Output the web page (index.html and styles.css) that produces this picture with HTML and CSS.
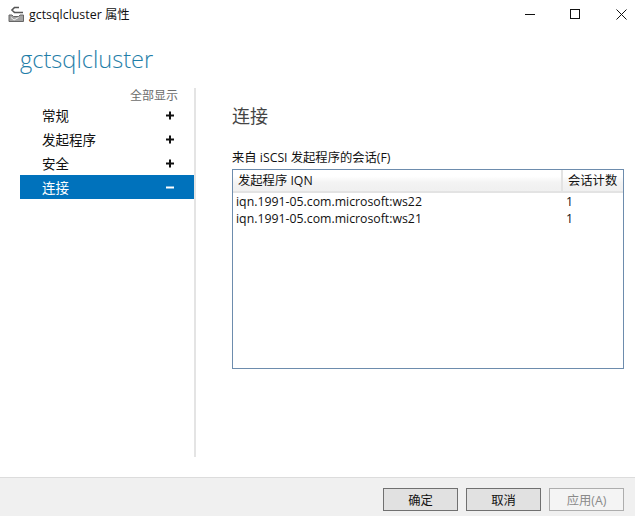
FILE: index.html
```html
<!DOCTYPE html>
<html lang="zh">
<head>
<meta charset="utf-8">
<title>gctsqlcluster 属性</title>
<link rel="stylesheet" href="styles.css">
</head>
<body>
<div class="window">
  <header class="titlebar">
    <svg class="app-icon" width="16" height="16" viewBox="0 0 16 16"><path d="M1 9h3l1.500 1.500h5L12 9h3.500v6.500H1z" fill="#a3a3a3" stroke="#666" stroke-width="1"/><path d="M3 11.500l3 2.500 4.500-2.500" fill="none" stroke="#f0f0f0" stroke-width="1"/><path d="M11 1.500H6.500L4 4l2.500 2.500H15" fill="none" stroke="#555" stroke-width="1.600"/></svg>
    <span class="title">gctsqlcluster 属性</span>
    <div class="win-controls">
      <svg width="11" height="11" viewBox="0 0 11 11"><path d="M1 5.500h10" stroke="#111" stroke-width="1"/></svg>
      <svg width="11" height="11" viewBox="0 0 11 11"><rect x="0.500" y="0.500" width="9" height="9" fill="none" stroke="#111"/></svg>
      <svg width="11" height="11" viewBox="0 0 11 11"><path d="M0.500 0.500l10 10M10.500 0.500l-10 10" stroke="#111" stroke-width="1"/></svg>
    </div>
  </header>
  <h1 class="app-name">gctsqlcluster</h1>
  <div class="content">
    <nav class="sidebar">
      <div class="show-all">全部显示</div>
      <div class="nav-item"><span>常规</span><svg class="sign" width="9" height="9" viewBox="0 0 9 9"><path d="M0 4.500h8M4 0.500v8" stroke="currentColor" stroke-width="2"/></svg></div>
      <div class="nav-item"><span>发起程序</span><svg class="sign" width="9" height="9" viewBox="0 0 9 9"><path d="M0 4.500h8M4 0.500v8" stroke="currentColor" stroke-width="2"/></svg></div>
      <div class="nav-item"><span>安全</span><svg class="sign" width="9" height="9" viewBox="0 0 9 9"><path d="M0 4.500h8M4 0.500v8" stroke="currentColor" stroke-width="2"/></svg></div>
      <div class="nav-item active"><span>连接</span><svg class="sign" width="9" height="9" viewBox="0 0 9 9"><path d="M0 4.500h8" stroke="currentColor" stroke-width="2"/></svg></div>
    </nav>
    <main class="panel">
      <h2 class="panel-title">连接</h2>
      <div class="list-label">来自 iSCSI 发起程序的会话(F)</div>
      <div class="list">
        <div class="list-head">
          <div class="col-a">发起程序 IQN</div>
          <div class="col-b">会话计数</div>
        </div>
        <div class="list-row"><div class="cell-a">iqn.1991-05.com.microsoft:ws22</div><div class="cell-b">1</div></div>
        <div class="list-row"><div class="cell-a">iqn.1991-05.com.microsoft:ws21</div><div class="cell-b">1</div></div>
      </div>
    </main>
  </div>
  <footer class="footer">
    <button class="btn">确定</button>
    <button class="btn">取消</button>
    <button class="btn disabled">应用(A)</button>
  </footer>
</div>
</body>
</html>
```
FILE: styles.css
```css
* { box-sizing: border-box; }
html, body { margin: 0; padding: 0; }
body {
  width: 635px;
  height: 516px;
  overflow: hidden;
  background: #fff;
  font-family: "Open Sans", "Noto Sans CJK SC", sans-serif;
  font-size: 12.3px;
  color: #111;
}
.window { display: flex; flex-direction: column; height: 516px; }
.titlebar { display: flex; align-items: center; height: 30px; padding-left: 8px; flex: none; }
.app-icon { flex: none; margin-bottom: 2px; }
.title { margin-left: 5px; font-size: 12.4px; line-height: 16px; }
.win-controls { margin-left: auto; display: flex; gap: 35px; padding: 0 8px 2px 0; align-items: center; }
.win-controls svg { display: block; }
.app-name {
  margin: 12px 0 0 20px;
  height: 34px;
  font-size: 23.6px;
  line-height: 34px;
  font-weight: 300;
  color: #1f7ea8;
  font-family: "Open Sans", sans-serif;
}
.content { display: flex; flex: 1; min-height: 0; padding: 12px 0 20px 20px; }
.sidebar { width: 176px; border-right: 2px solid #e4e4e4; flex: none; }
.show-all { text-align: right; padding-right: 16px; height: 15px; line-height: 16px; color: #6d6d6d; font-size: 12px; }
.nav-item {
  display: flex;
  justify-content: space-between;
  align-items: center;
  height: 24px;
  padding: 0 19px 0 22px;
  font-size: 13.5px;
  color: #111;
}
.nav-item.active { background: #0072bc; color: #fff; }
.sign { display: block; }
.panel { flex: 1; padding: 0 0 0 36px; min-width: 0; }
.panel-title { margin: 15px 0 0; font-size: 18px; line-height: 26px; font-weight: 400; color: #444; }
.list-label { margin-top: 21px; line-height: 16px; }
.list {
  margin-top: 3px;
  width: 392px;
  height: 200px;
  border: 1px solid #6d8cad;
}
.list-head { display: flex; height: 23px; background: linear-gradient(#fff 30%, #f3f3f3 60%, #f0f0f0); border-bottom: 2px solid #e3e3e3; line-height: 21px; }
.col-a { width: 330px; padding-left: 5px; border-right: 2px solid #e3e3e3; }
.col-b { flex: 1; padding-left: 5px; }
.list-row { display: flex; height: 17px; line-height: 17px; }
.cell-a { width: 333px; padding-left: 3px; }
.cell-b { flex: 1; }
.footer {
  flex: none;
  height: 39px;
  background: #f0f0f0;
  border-top: 1px solid #dcdcdc;
  display: flex;
  justify-content: flex-end;
  align-items: flex-start;
  gap: 8px;
  padding: 10px 11px 0 0;
}
.btn {
  width: 75px;
  height: 23px;
  padding: 0;
  background: #e1e1e1;
  border: 1px solid #707070;
  outline: 0;
  font: inherit;
  color: #111;
}
.btn.disabled { background: #f4f4f4; border-color: #adadad; color: #8a8a8a; }
```
